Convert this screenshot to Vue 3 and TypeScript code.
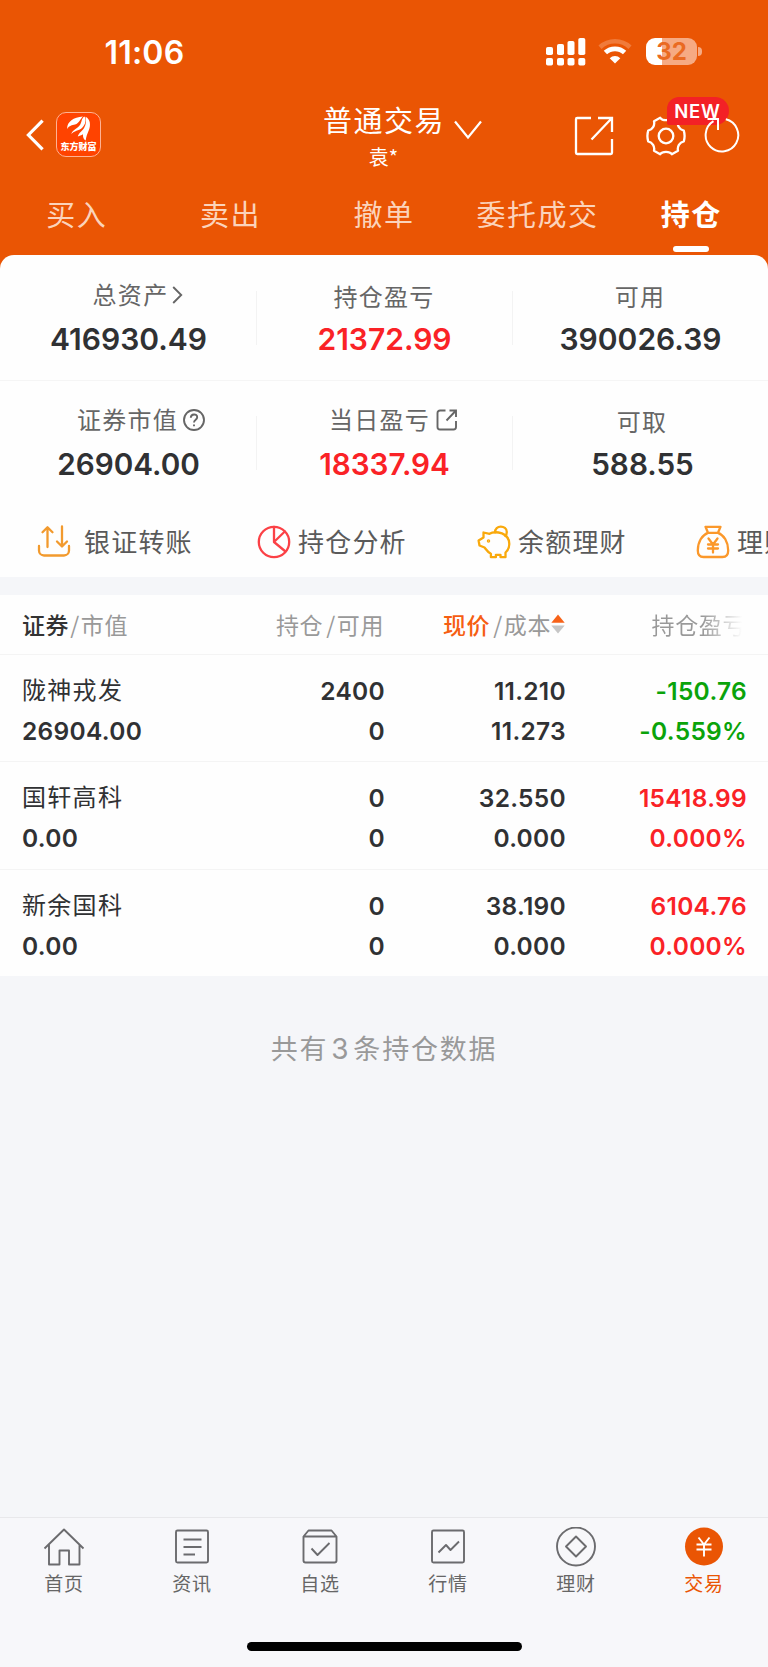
<script setup lang="ts">
interface Stat {
  label: string
  value: string
  red?: boolean
  mark?: 'arrow' | 'help' | 'open'
}
interface Holding {
  name: string
  worth: string
  held: string
  usable: string
  price: string
  cost: string
  profit: string
  rate: string
  down?: boolean
}

const tabs: string[] = ['买入', '卖出', '撤单', '委托成交', '持仓']
const activeTab = '持仓'

const stats: Stat[][] = [
  [
    { label: '总资产', value: '416930.49', mark: 'arrow' },
    { label: '持仓盈亏', value: '21372.99', red: true },
    { label: '可用', value: '390026.39' },
  ],
  [
    { label: '证券市值', value: '26904.00', mark: 'help' },
    { label: '当日盈亏', value: '18337.94', red: true, mark: 'open' },
    { label: '可取', value: '588.55' },
  ],
]

const actions: { id: string; label: string }[] = [
  { id: 'transfer', label: '银证转账' },
  { id: 'analysis', label: '持仓分析' },
  { id: 'piggy', label: '余额理财' },
  { id: 'bag', label: '理财' },
]

const holdings: Holding[] = [
  { name: '陇神戎发', worth: '26904.00', held: '2400', usable: '0', price: '11.210', cost: '11.273', profit: '-150.76', rate: '-0.559%', down: true },
  { name: '国轩高科', worth: '0.00', held: '0', usable: '0', price: '32.550', cost: '0.000', profit: '15418.99', rate: '0.000%' },
  { name: '新余国科', worth: '0.00', held: '0', usable: '0', price: '38.190', cost: '0.000', profit: '6104.76', rate: '0.000%' },
]

const navItems: string[] = ['首页', '资讯', '自选', '行情', '理财', '交易']
</script>

<template>
  <div class="screen">
    <header class="header">
      <div class="status">
        <span class="time">11:06</span>
        <div class="status-icons">
          <svg class="signal" width="40" height="28" viewBox="0 0 40 28" fill="#fff">
            <rect x="0" y="9" width="7" height="8" rx="1.8" /><rect x="11" y="6" width="7" height="11" rx="1.8" />
            <rect x="21.5" y="3" width="7" height="14" rx="1.8" /><rect x="32.3" y="0" width="7" height="17" rx="1.8" />
            <rect x="0" y="20" width="7" height="7.500" rx="1.8" /><rect x="11" y="20" width="7" height="7.500" rx="1.8" />
            <rect x="21.5" y="20" width="7" height="7.500" rx="1.8" /><rect x="32.3" y="20" width="7" height="7.500" rx="1.8" />
          </svg>
          <svg class="wifi" width="34" height="26" viewBox="0 0 34 26">
            <path d="M2 9.2a22 22 0 0 1 30 0" fill="none" stroke="#f07b3b" stroke-width="4.6" />
            <path d="M7.4 14.6a14 14 0 0 1 19.2 0" fill="none" stroke="#fff" stroke-width="4.8" />
            <path d="M17 25.4l-5.3-5.2a7.6 7.6 0 0 1 10.6 0z" fill="#fff" />
          </svg>
          <div class="battery"><span>32</span></div>
          <i class="battery-tip"></i>
        </div>
      </div>

      <div class="titlebar">
        <div class="brand">
          <svg width="18" height="32" viewBox="0 0 18 32" fill="none" stroke="#fff" stroke-width="3.200"><path d="M16.6 1.6L2.4 16l14.2 14.4" /></svg>
          <div class="logo">
            <svg width="24" height="25" viewBox="0 0 24 25" fill="#fff">
              <path d="M.2 13C-.3 6 6 1.200 16 .4 13 3 12.500 7 8 8.600 5 9.700 2.300 9.200.2 13z" />
              <path d="M4.300 18C5.500 13.500 10.500 13 13.300 8.400 14.900 5.600 14.500 2.400 17.300.5c2.400 2.500 1.400 8-2.300 11.400-3.400 3-7.800 2.600-10.700 6.100z" />
              <path d="M10.800 20.500C12 16.500 15.300 15.200 17.200 11.800 19.300 8 19.500 4 18.500.7c5 2.600 5.400 8.500 3.300 13.600-1.600 3.900-2.600 6-3.100 10.200-2.200-1-2.900-3.400-2.700-6.300-1.700 1.300-3.400 1.300-5.200 2.300z" />
            </svg>
            <b>东方财富</b>
          </div>
        </div>
        <div class="account">
          <div class="account-type">普通交易
            <svg width="28" height="20" viewBox="0 0 28 20" fill="none" stroke="#fff" stroke-width="2.200"><path d="M1 1.500l13 16 13-16" /></svg>
          </div>
          <div class="account-name">袁*</div>
        </div>
        <div class="tools">
          <svg class="share" width="40" height="40" viewBox="0 0 40 40" fill="none" stroke="#fff" stroke-width="2.300">
            <path d="M17 2H3.200A1.200 1.200 0 0 0 2 3.200V36.800A1.200 1.200 0 0 0 3.200 38H36.800A1.200 1.200 0 0 0 38 36.800V23M24 2H38V16M38 2L17.500 23.500" />
          </svg>
          <div class="gear">
            <svg width="40" height="40" viewBox="0 0 40 40" fill="none" stroke="#fff" stroke-width="2.300" stroke-linejoin="round">
              <path d="M14.200 1.800C16.500 5 23.500 5 25.800 1.800L32 5.200C31 9.500 33.500 13.700 37.800 14.700Q39.400 20 37.800 25.300C33.500 26.300 31 30.500 32 34.800L25.800 38.200C23.500 35 16.500 35 14.200 38.200L8 34.800C9 30.500 6.500 26.300 2.200 25.300Q.6 20 2.200 14.700C6.500 13.700 9 9.500 8 5.200Z" />
              <circle cx="20" cy="20" r="7.300" />
            </svg>
            <span class="new">NEW</span>
          </div>
          <svg class="refresh" width="36" height="38" viewBox="0 0 36 38" fill="none" stroke="#fff" stroke-width="2">
            <path d="M21.800 4.300A16.300 16.300 0 1 1 9.500 6.200M3.500 4H14V15" />
          </svg>
        </div>
      </div>

      <nav class="tabs">
        <span v-for="tab in tabs" :key="tab" class="tab" :class="{ active: tab === activeTab }">{{ tab }}</span>
      </nav>
    </header>

    <section class="summary">
      <div v-for="(row, r) in stats" :key="r" class="stat-row">
        <div v-for="stat in row" :key="stat.label" class="stat">
          <div class="stat-label" :class="stat.mark ? ['raised', 'with-' + stat.mark] : ''">
            <span>{{ stat.label }}</span>
            <svg v-if="stat.mark === 'arrow'" class="m-arrow" width="11" height="18" viewBox="0 0 11 18"><path d="M1.200 1l8 8-8 8" /></svg>
            <svg v-if="stat.mark === 'help'" class="m-help" width="22" height="22" viewBox="0 0 22 22">
              <circle cx="11" cy="11" r="10" /><path d="M7.800 8.800C7.800 4.400 14.200 4.400 14.200 8.300 14.200 10.800 11 10.800 11 13.600M11 15.400V17.200" />
            </svg>
            <svg v-if="stat.mark === 'open'" class="m-open" width="22" height="22" viewBox="0 0 22 22">
              <path d="M9.500 1.500H4A2.500 2.500 0 0 0 1.500 4V18A2.500 2.500 0 0 0 4 20.500H17.500A2.500 2.500 0 0 0 20 18V12M13.500 1.500H20V8M20 1.500L10.500 11.500" />
            </svg>
          </div>
          <div class="stat-value" :class="{ red: stat.red }">{{ stat.value }}</div>
        </div>
      </div>
      <div class="actions">
        <div v-for="action in actions" :key="action.id" class="action" :class="action.id">
          <svg v-if="action.id === 'transfer'" width="34" height="34" viewBox="0 0 34 34" stroke="#f29a2e">
            <path d="M2 21v4.500a5 5 0 0 0 5 5h20a5 5 0 0 0 5-5V21M10.500 22V2.500M5.500 7.200l5-5 5 5M25 1.500V21M20 16.500l5 5 5-5" />
          </svg>
          <svg v-else-if="action.id === 'analysis'" width="34" height="34" viewBox="0 0 34 34" stroke="#fb4146">
            <circle cx="17" cy="17" r="15.200" /><path d="M17 1.800V17L28.500 26.500M17 17L27.800 6.500" />
          </svg>
          <svg v-else-if="action.id === 'piggy'" width="34" height="34" viewBox="0 0 34 34" stroke="#f9a90c">
            <path d="M6.500 7.500l6 1.300C15 7.300 20 6.800 25 8.400 30 10.500 32.300 14.500 32.300 19c0 3.500-1.500 6.500-3.800 8.500v4.700h-5v-2.400h-4.600v2.400h-5v-3.500C10.500 27 9 24.500 7.500 22.500L2.500 20.500 1.600 15.500 6.500 12.500z" />
            <path d="M18.200 7.300C17.500-.2 29.800-.2 29.800 7c0 2-.7 3.200-1.500 4" /><circle cx="11.500" cy="16" r=".6" fill="#f9a90c" />
          </svg>
          <svg v-else width="34" height="34" viewBox="0 0 34 34" stroke="#fb982b">
            <path d="M9.500 1.800h15l-2.500 6H12zM12 7.800C6 10 1.800 17 1.800 25.500c0 4.500 2 6.500 5.700 6.500h19c3.700 0 5.700-2 5.700-6.500C32.200 17 28 10 22 7.800M12.500 13.500l4.500 6 4.500-6M12 19.500h10M12 23.500h10M17 19.500V27.500" />
          </svg>
          <span>{{ action.label }}</span>
        </div>
      </div>
    </section>

    <section class="positions">
      <div class="grid head">
        <div class="col-name"><span class="dark">证券</span><i>/</i>市值</div>
        <div>持仓<i>/</i>可用</div>
        <div class="col-price"><span class="orange">现价</span><i>/</i>成本
          <svg width="14" height="20" viewBox="0 0 14 20"><path d="M7 .5L13.700 8.700H.3z" fill="#f76218" /><path d="M7 19.500L13.700 11.500H.3z" fill="#c6c6c6" /></svg>
        </div>
        <div class="fade">持仓盈亏</div>
      </div>
      <div v-for="item in holdings" :key="item.name" class="grid holding">
        <div class="pair left"><span class="name">{{ item.name }}</span><span>{{ item.worth }}</span></div>
        <div class="pair"><span>{{ item.held }}</span><span>{{ item.usable }}</span></div>
        <div class="pair"><span>{{ item.price }}</span><span>{{ item.cost }}</span></div>
        <div class="pair" :class="item.down ? 'green' : 'red'"><span>{{ item.profit }}</span><span>{{ item.rate }}</span></div>
      </div>
    </section>

    <p class="total">共有<em>{{ holdings.length }}</em>条持仓数据</p>

    <footer class="bottom">
      <div class="nav">
        <div v-for="(item, n) in navItems" :key="item" class="nav-item" :class="{ current: n === 5 }">
          <svg width="42" height="40" viewBox="0 0 42 40" fill="none" stroke="#6b6b6e" stroke-width="1.900" stroke-linejoin="round">
            <path v-if="n === 0" d="M1.500 21.500L21 2.500l19.500 19M6 17.500V37.500H16.500V23.500H26V37.500H36.500V17.500" />
            <template v-else-if="n === 1"><rect x="5" y="3.500" width="32" height="32" rx="1.500" /><path d="M12.500 12.500h18M12.500 20h18M12.500 27.500h11.500" /></template>
            <path v-else-if="n === 2" d="M4.500 9.500L9.500 3.500h23l5 6V33.500a2 2 0 0 1-2 2h-29a2 2 0 0 1-2-2zM4.500 9.500h33M12.500 21.500l6 6.500L30.500 16" />
            <template v-else-if="n === 3"><rect x="5" y="3.500" width="32" height="32" rx="1.500" /><path d="M11.500 25.500l7.500-7.500 4.500 5 8.500-8.500" /></template>
            <template v-else-if="n === 4"><circle cx="21" cy="19.500" r="19" /><path d="M21 9.500l10 10-10 10-10-10z" /></template>
            <template v-else><circle cx="21" cy="19.500" r="19" fill="#ea5504" stroke="none" /><path d="M15.500 10.500l5.500 7 5.500-7M13.500 17.500h15M13.500 22.500h15M21 17.500V29.500" stroke="#fff" /></template>
          </svg>
          <span>{{ item }}</span>
        </div>
      </div>
      <div class="home-indicator"></div>
    </footer>
  </div>
</template>

<style>
body {
  margin: 0;
  background: #f6f7f9;
}
</style>

<style scoped>
.screen {
  width: 768px;
  height: 1667px;
  display: flex;
  flex-direction: column;
  overflow: hidden;
  background: #f5f6f9;
  color: #333;
  font-family: "Noto Sans CJK SC", "Liberation Sans", sans-serif;
}
svg { display: block; flex: none; }
i, em { font-style: normal; }

.header {
  height: 271px;
  flex: none;
  background: #ea5504;
  color: #fff;
}
.status {
  height: 104px;
  display: flex;
  justify-content: space-between;
  box-sizing: border-box;
  padding: 32px 66px 0 104.500px;
}
.time { font: 600 32px/42px Inter, sans-serif; letter-spacing: .2px; }
.status-icons { display: flex; align-items: flex-start; padding-top: 6px; }
.signal { margin-right: 12px; }
.wifi { margin-right: 14px; }
.battery {
  width: 51px;
  height: 27px;
  border-radius: 9px;
  background: linear-gradient(90deg, #fff 16px, #f6aa83 16px);
  font: 700 24px/28px Inter, sans-serif;
  text-align: center;
  color: #ea6a22;
}
.battery-tip { width: 4px; height: 9px; margin: 9px 0 0 1px; border-radius: 0 4px 4px 0; background: #f6aa83; }

.titlebar {
  height: 76px;
  display: grid;
  grid-template-columns: 323px 1fr 218px;
}
.brand { display: flex; padding: 8px 0 0 26px; }
.brand > svg { margin-top: 7px; }
.logo {
  width: 45px;
  height: 45px;
  box-sizing: border-box;
  margin-left: 12px;
  border: 1.500px solid #ffb293;
  border-radius: 10px;
  background: #ff4300;
  display: flex;
  flex-direction: column;
  align-items: center;
  padding-top: 3px;
}
.logo b { font-family: "Noto Sans CJK SC", sans-serif; font-weight: 900; font-size: 9px; line-height: 11px; white-space: nowrap; }
.account-type { display: flex; align-items: center; height: 32px; margin-top: -1px; font-size: 29px; letter-spacing: 1.500px; line-height: 32px; white-space: nowrap; }
.account-type svg { margin: 22px 0 0 9px; }
.account-name { width: 121px; margin-top: 9px; text-align: center; font: 20px/26px "Noto Sans CJK SC", sans-serif; }
.tools { display: flex; padding: 12px 0 0 24px; }
.gear { position: relative; margin-left: 31.500px; height: 40px; }
.new {
  position: absolute;
  left: 21px;
  top: -19px;
  width: 62px;
  height: 28px;
  border-radius: 12px 14px 14px 2px;
  background: #f32126;
  text-align: center;
  font: 600 18.500px/28px Inter, sans-serif;
  letter-spacing: .8px;
}
.refresh { position: relative; margin: -1px 0 0 18px; }

.tabs { display: grid; grid-template-columns: repeat(5, 1fr); width: 768px; }
.tab {
  display: flex;
  flex-direction: column;
  align-items: center;
  font-size: 29px;
  line-height: 64px;
  letter-spacing: 1.500px;
  height: 73px;
  color: #fbd3bb;
  margin-top: 1px;
  white-space: nowrap;
}
.tab.active { color: #fff; font-weight: 700; }
.tab.active::after { content: ""; width: 36px; height: 6px; margin-top: 1px; border-radius: 3px; background: #fff; }

.summary {
  height: 322px;
  flex: none;
  margin-top: -16px;
  border-radius: 14px 14px 0 0;
  background: #fefefe;
  overflow: hidden;
}
.stat-row { display: grid; grid-template-columns: repeat(3, 256px); height: 125px; }
.stat-row:first-child { border-bottom: 1px solid #f5f5f5; }
.stat-row:nth-child(2) { height: 125px; margin-top: -1px; }
.stat-row:nth-child(2) .stat:last-child { padding-left: 4px; }
.stat { position: relative; text-align: center; }
.stat + .stat::before { content: ""; position: absolute; left: 0; top: 36px; width: 1px; height: 54px; background: #f3f3f3; }
.stat-label {
  display: flex;
  align-items: center;
  justify-content: center;
  height: 30px;
  padding-top: 26px;
  color: #666;
  font-size: 24px;
  letter-spacing: 1.300px;
  line-height: 30px;
}
.stat-label.raised { padding-top: 24px; padding-bottom: 2px; }
.with-arrow { padding-left: 20px; }
.with-help { padding-left: 26px; }
.with-open { padding-left: 19px; }
.stat-label svg { fill: none; stroke: #666; stroke-width: 1.900; }
.stat-label .m-arrow { margin: 2px 0 0 4px; }
.m-help { margin: 2px 0 0 5px; }
.m-open { margin: 2px 0 0 6px; }
.stat-value { margin-top: 8px; padding-left: 1px; color: #303133; font: 600 30px/40px Inter, sans-serif; }
.stat-row:nth-child(2) .stat-value { font-size: 29.700px; }
.red, .stat-value.red { color: #fa2226; }
.green { color: #0aa30a; }

.actions { display: flex; padding-left: 37px; height: 73px; align-items: center; }
.action { width: 220px; flex: none; display: flex; align-items: center; color: #5a5a5a; font-size: 26px; line-height: 36px; letter-spacing: 1.200px; }
.action svg { fill: none; stroke-width: 2.300; stroke-linecap: round; stroke-linejoin: round; }
.action span { margin: -2px 0 0 7px; white-space: nowrap; }
.transfer span { margin-left: 13px; }
.bag { margin-left: -1px; }

.positions { flex: none; margin-top: 18px; background: #fefefe; }
.grid {
  display: grid;
  grid-template-columns: 182px 180px 181px 181px;
  padding: 0 22px;
  text-align: right;
}
.head { height: 57px; padding-bottom: 2px; align-items: center; border-bottom: 1px solid #f4f4f4; color: #999; font-size: 23px; line-height: 32px; letter-spacing: .6px; }
.head i { margin: 0 1px 0 3px; }
.col-name, .left { text-align: left; }
.col-name i { margin: 0 1px; }
.dark { color: #333; font-weight: 500; }
.orange { color: #f65e12; font-weight: 500; }
.col-price { display: flex; justify-content: flex-end; align-items: center; }
.fade { color: transparent; background: linear-gradient(90deg, #999 76%, #fefefe 98%); background-clip: text; -webkit-background-clip: text; }
.holding { height: 106.300px; border-bottom: 1px solid #f4f4f4; font: 600 24.500px/40px Inter, sans-serif; letter-spacing: .3px; color: #303133; }
.holding:last-child { border-bottom: 0; }
.holding .red { color: #fa2226; }
.holding .green { color: #0aa30a; }
.pair { display: flex; flex-direction: column; padding-top: 16px; margin-right: -1px; }
.name { margin-top: -2px; padding-bottom: 2px; font: 400 24px/40px "Noto Sans CJK SC", sans-serif; letter-spacing: 1.300px; }

.total { margin: 53px 0 0; text-align: center; color: #999; font-size: 27px; line-height: 38px; letter-spacing: 1.800px; }
.total em { font: 28px/30px Inter, sans-serif; margin: 0 3px; }

.bottom { margin-top: auto; height: 150px; flex: none; box-sizing: border-box; border-top: 1px solid #e8e8eb; background: #f7f7fa; }
.nav { display: grid; grid-template-columns: repeat(6, 128px); height: 124px; }
.nav-item { display: flex; flex-direction: column; align-items: center; padding-top: 8.500px; color: #666; font-size: 19px; line-height: 28px; letter-spacing: .8px; }
.nav-item span { margin-top: 2px; }
.current { color: #ea5504; }
.home-indicator { width: 275px; height: 9px; margin: 0 auto; border-radius: 5px; background: #000; }
</style>
